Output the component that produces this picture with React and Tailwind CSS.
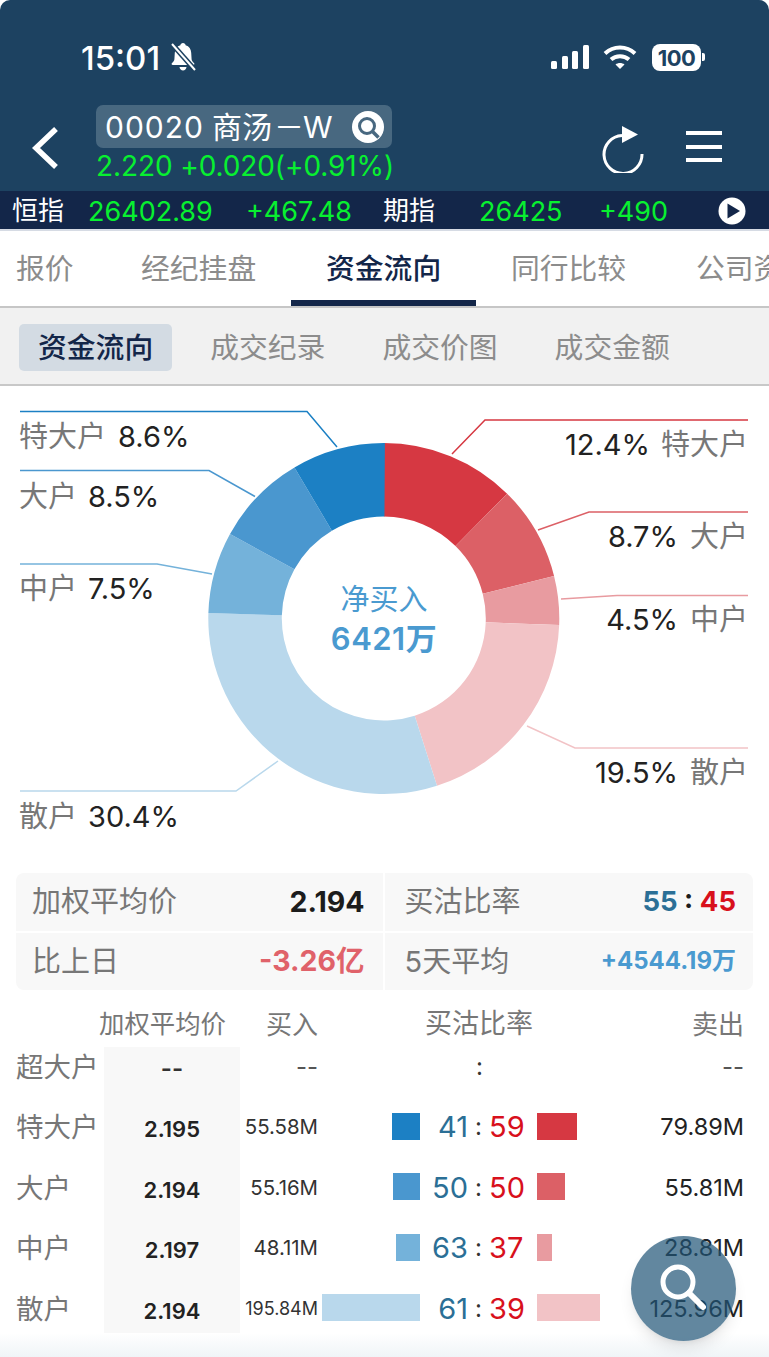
import React from "react";

const slices = [
  { pct: 12.4, color: "#d63842" },
  { pct: 8.7, color: "#dc6066" },
  { pct: 4.5, color: "#e89ba0" },
  { pct: 19.5, color: "#f2c3c6" },
  { pct: 30.4, color: "#b9d8ec" },
  { pct: 7.5, color: "#74b2da" },
  { pct: 8.5, color: "#4a97cf" },
  { pct: 8.6, color: "#1c80c4" },
];

const leaders = [
  { points: "20,411.5 307,411.5 337,447", color: "#1c80c4" },
  { points: "20,470.5 209,470.5 255,496.5", color: "#4a97cf" },
  { points: "20,564 157,564 212,574", color: "#74b2da" },
  { points: "20,791 236,791 278,761", color: "#b9d8ec" },
  { points: "748,420 485,420 452,454", color: "#d63842" },
  { points: "748,512 589,512 538,530", color: "#dc6066" },
  { points: "748,595.5 617,595.5 561,599", color: "#e89ba0" },
  { points: "748,748 575,748 527,726", color: "#f2c3c6" },
];

const leftLabels = [
  { name: "特大户", value: "8.6%", y: 447, x: 118 },
  { name: "大户", value: "8.5%", y: 507, x: 88 },
  { name: "中户", value: "7.5%", y: 599, x: 88 },
  { name: "散户", value: "30.4%", y: 827, x: 88 },
];

const rightLabels = [
  { name: "特大户", value: "12.4%", y: 455, x: 650 },
  { name: "大户", value: "8.7%", y: 547, x: 678 },
  { name: "中户", value: "4.5%", y: 630, x: 678 },
  { name: "散户", value: "19.5%", y: 783, x: 678 },
];

const rows = [
  { name: "特大户", avg: "2.195", buy: "55.58M", l: "41", r: "59", lw: 28, rw: 40, lc: "#1c80c4", rc: "#d63842", sell: "79.89M" },
  { name: "大户", avg: "2.194", buy: "55.16M", l: "50", r: "50", lw: 27, rw: 28, lc: "#4a97cf", rc: "#dc6066", sell: "55.81M" },
  { name: "中户", avg: "2.197", buy: "48.11M", l: "63", r: "37", lw: 24, rw: 15, lc: "#74b2da", rc: "#e89ba0", sell: "28.81M" },
  { name: "散户", avg: "2.194", buy: "195.84M", l: "61", r: "39", lw: 98, rw: 63, lc: "#b9d8ec", rc: "#f2c3c6", sell: "125.96M", small: true, last: true },
];

const polar = (r, deg) => {
  const a = (deg * Math.PI) / 180;
  return [383.8 + r * Math.sin(a), 618.5 - r * Math.cos(a)];
};

const slicePath = (start, end) => {
  const R = 175.5;
  const r = 102;
  const big = end - start > 180 ? 1 : 0;
  const [x1, y1] = polar(R, start);
  const [x2, y2] = polar(R, end);
  const [x3, y3] = polar(r, end);
  const [x4, y4] = polar(r, start);
  return `M${x1} ${y1}A${R} ${R} 0 ${big} 1 ${x2} ${y2}L${x3} ${y3}A${r} ${r} 0 ${big} 0 ${x4} ${y4}Z`;
};

const Donut = () => {
  let angle = 0;
  return (
    <svg width="769" height="487" viewBox="0 386 769 487" className="block">
      {slices.map((s) => {
        const start = angle;
        angle += (s.pct / 100.0) * 360;
        return <path key={s.color} d={slicePath(start, angle)} fill={s.color} />;
      })}
      {leaders.map((l) => (
        <polyline key={l.points} points={l.points} fill="none" stroke={l.color} strokeWidth="1.5" />
      ))}
      {leftLabels.map((l) => (
        <g key={l.name} fontSize="29">
          <text x="19" y={l.y} fill="#777777">{l.name}</text>
          <text x={l.x} y={l.y} fill="#222222">{l.value}</text>
        </g>
      ))}
      {rightLabels.map((l) => (
        <g key={l.name} fontSize="29" textAnchor="end">
          <text x="748" y={l.y} fill="#777777">{l.name}</text>
          <text x={l.x} y={l.y} fill="#222222">{l.value}</text>
        </g>
      ))}
      <text x="384" y="610" textAnchor="middle" fontSize="29" fill="#4a9ad0">净买入</text>
      <text x="384" y="650" textAnchor="middle" fontSize="31" fontWeight="600" letterSpacing="0.5" fill="#4a9ad0">6421万</text>
    </svg>
  );
};

const StatusBar = () => (
  <div className="flex h-[102px] items-start pt-[39px]">
    <span className="ml-[81px] text-[33px] leading-[38px] font-medium text-white">15:01</span>
    <svg width="28" height="30" viewBox="0 0 28 30" className="ml-[9px] mt-[3px]" fill="white">
      <path d="M14 1c1.5 0 2.4 1 2.6 2.2 3.6 1 5.4 4 5.6 7.6l.4 6.4c.1 1.600 1.200 2.700 2.400 3.800.8.800.4 2-.8 2H3.800c-1.200 0-1.600-1.200-.8-2 1.200-1.100 2.300-2.200 2.400-3.800l.4-6.400C6 7.200 7.800 4.200 11.400 3.200 11.600 2 12.500 1 14 1z" />
      <path d="M10.500 25h7c-.3 2-1.700 3.500-3.500 3.500s-3.200-1.500-3.500-3.500z" />
      <path d="M3 2 26 28" stroke="#1d4261" strokeWidth="5" />
      <path d="M3 2 26 28" stroke="white" strokeWidth="2" />
    </svg>
    <svg width="38" height="24" viewBox="0 0 38 24" className="ml-[354px] mt-[6px]" fill="white">
      <rect x="0" y="16" width="6" height="8" rx="1.500" />
      <rect x="11" y="11" width="6" height="13" rx="1.500" />
      <rect x="21" y="6" width="6" height="18" rx="1.500" />
      <rect x="32" y="0" width="6" height="24" rx="1.500" />
    </svg>
    <svg width="34" height="24" viewBox="0 0 34 24" className="ml-[14px] mt-[6px]" fill="none" stroke="white" strokeWidth="4">
      <path d="M2 8.500C10.500 0.500 23.500 0.500 32 8.500" />
      <path d="M8 14.500c5-4.500 13-4.500 18 0" />
      <path d="M12.500 19.500 17 24l4.500-4.500c-2.500-2-6.500-2-9 0z" fill="white" stroke="none" />
    </svg>
    <div className="ml-[15px] mt-[5px] flex h-[27px] w-[49px] items-center justify-center rounded-[8px] bg-white text-[22px] leading-none font-bold tracking-[-0.5px] text-[#1d4261]">
      100
    </div>
    <div className="ml-[1px] mt-[14px] h-[8px] w-[3px] rounded-r-[2px] bg-white" />
  </div>
);

const NavRow = () => (
  <div className="flex h-[89px] items-start">
    <svg width="30" height="44" viewBox="0 0 30 44" className="ml-[30px] mt-[24px]" fill="none" stroke="white" strokeWidth="5.500">
      <path d="M26 3 6 22l20 19" />
    </svg>
    <div className="ml-[36px] flex w-[296px] flex-col items-start">
      <div className="mt-[3px] flex h-[43px] w-[296px] items-center rounded-[7px] bg-[#486880] pl-[9px] text-[30px] leading-none whitespace-nowrap text-white">
        <span className="tracking-[1px]">00020</span>
        <span className="ml-[8px]">商汤</span>
        <span className="ml-[2px]">－</span>
        <span className="ml-[-1px]">W</span>
        <svg width="34" height="34" viewBox="0 0 34 34" className="absolute ml-[246px]">
          <circle cx="17" cy="17" r="16" fill="white" />
          <circle cx="16" cy="16" r="7.500" fill="none" stroke="#486880" strokeWidth="3" />
          <path d="m21.500 21.500 6 6" stroke="#486880" strokeWidth="3.500" />
        </svg>
      </div>
      <div className="mt-[1px] text-[28px] leading-[34px] tracking-[-0.1px] whitespace-nowrap text-[#08f030]">
        2.220 +0.020(+0.91%)
      </div>
    </div>
    <svg width="44" height="50" viewBox="0 0 44 50" className="ml-[209px] mt-[21px]" fill="none">
      <path d="M21 12.500A19 19 0 1 0 41 31" stroke="white" strokeWidth="3" />
      <path d="M21 3 37 11.500 21 20z" fill="white" />
    </svg>
    <svg width="36" height="32" viewBox="0 0 36 32" className="ml-[41px] mt-[29px]" fill="white">
      <rect y="0" width="36" height="4" />
      <rect y="14" width="36" height="4" />
      <rect y="27" width="36" height="4" />
    </svg>
  </div>
);

const Ticker = () => (
  <div className="flex h-[38px] items-center bg-[#132649] pt-[2px] text-[27px] leading-none whitespace-nowrap text-[#08f030]">
    <span className="ml-[12px] w-[76px] text-[26px] text-white">恒指</span>
    <span className="w-[158px]">26402.89</span>
    <span className="w-[137px]">+467.48</span>
    <span className="w-[96px] text-[26px] text-white">期指</span>
    <span className="w-[120px]">26425</span>
    <span className="w-[119px]">+490</span>
    <svg width="28" height="28" viewBox="0 0 28 28">
      <circle cx="14" cy="14" r="13.500" fill="white" />
      <path d="M9.500 6.500 22 14 9.500 21.500z" fill="#132649" />
    </svg>
  </div>
);

const Tabs = () => (
  <div className="flex h-[79px] overflow-hidden border-t-2 border-b-2 border-t-[#d6dbe4] border-b-[#c6c6c6] text-[28.800px] text-[#8c8c8c]">
    {["报价", "经纪挂盘", "资金流向", "同行比较", "公司资金"].map((t, i) => (
      <div
        key={t}
        className={
          i === 2
            ? "flex shrink-0 items-center whitespace-nowrap border-b-[6px] border-[#132649] px-[34.900px] pt-[6px] font-medium text-[#132649]"
            : i === 0
              ? "flex shrink-0 items-center whitespace-nowrap pl-[16px] pr-[32.500px]"
              : "flex shrink-0 items-center whitespace-nowrap px-[34.900px]"
        }
      >
        {t}
      </div>
    ))}
  </div>
);

const SubTabs = () => (
  <div className="flex h-[78px] items-center gap-[19px] border-b-2 border-[#c8c8c8] bg-[#f1f1f1] pt-[3px] pl-[19px] text-[28.800px] text-[#8c8c8c]">
    <div className="flex h-[47px] items-center rounded-[5px] bg-[#d3dbe3] px-[19px] font-medium text-[#132649]">资金流向</div>
    <div className="px-[19px]">成交纪录</div>
    <div className="px-[19px]">成交价图</div>
    <div className="px-[19px]">成交金额</div>
  </div>
);

const Stats = () => (
  <div className="mx-[16px] grid grid-cols-[366.5px_1fr] grid-rows-[57.5px_57.5px] gap-[2px] overflow-hidden rounded-[8px] text-[29px] leading-none text-[#777777]">
    <div className="flex items-center justify-between bg-[#f8f8f8] pl-[16px] pr-[18px]">
      <span>加权平均价</span>
      <span className="text-[28.500px] font-bold text-[#1c1c1c]">2.194</span>
    </div>
    <div className="flex items-center justify-between bg-[#f8f8f8] pl-[20px] pr-[17px]">
      <span>买沽比率</span>
      <span className="text-[27.500px] font-bold text-[#1c1c1c]">
        <span className="text-[#2b6f96]">55</span> : <span className="text-[#d8101c]">45</span>
      </span>
    </div>
    <div className="flex items-center justify-between bg-[#f8f8f8] pl-[16px] pr-[18px]">
      <span>比上日</span>
      <span className="text-[28.500px] font-bold text-[#e0626a]">-3.26亿</span>
    </div>
    <div className="flex items-center justify-between bg-[#f8f8f8] pl-[20px] pr-[17px]">
      <span>5天平均</span>
      <span className="text-[24px] font-bold text-[#4a9ad0]">+4544.19万</span>
    </div>
  </div>
);

const TableHead = () => (
  <div className="flex h-[57px] items-center pl-[16px] pr-[25px] pt-[11px] text-[26px] text-[#777777]">
    <div className="w-[83px]" />
    <div className="w-[127px] whitespace-nowrap text-[25.400px]">加权平均价</div>
    <div className="w-[92px] text-right">买入</div>
    <div className="w-[215px] text-right text-[27px]">买沽比率</div>
    <div className="flex-1 text-right">卖出</div>
  </div>
);

const FirstRow = () => (
  <div className="flex h-[50px] items-start pl-[16px] pr-[25px] leading-[40px]">
    <div className="w-[88px] whitespace-nowrap text-[27.500px] text-[#777777]">超大户</div>
    <div className="h-full w-[136px] bg-[#f8f8f8] pt-[2px] text-center text-[24px] font-semibold text-[#333333]">--</div>
    <div className="w-[78px] text-right text-[24px] text-[#555555]">--</div>
    <div className="w-[219px] pl-[150px] text-[24px] text-[#333333]">
      <span className="ml-[8px]">:</span>
    </div>
    <div className="flex-1 text-right text-[24px] text-[#555555]">--</div>
  </div>
);

const Row = ({ row }) => (
  <div className={row.last ? "flex h-[54px] items-start pl-[16px] pr-[25px] leading-[60px]" : "flex h-[60.500px] items-start pl-[16px] pr-[25px] leading-[60px]"}>
    <div className="w-[88px] whitespace-nowrap text-[27.500px] text-[#777777]">{row.name}</div>
    <div className="h-full w-[136px] bg-[#f8f8f8] pt-[2px] text-center text-[22px] font-semibold text-[#222222]">{row.avg}</div>
    <div className={row.small ? "w-[78px] text-right text-[18px] text-[#333333]" : "w-[78px] text-right text-[20.400px] text-[#333333]"}>{row.buy}</div>
    <div className="flex h-[58px] w-[102px] items-center justify-end">
      <div className="h-[27px]" style={{ width: row.lw, backgroundColor: row.lc }} />
    </div>
    <div className="flex w-[117px] text-[29px]">
      <span className="w-[48px] text-right text-[#2b6f96]">{row.l}</span>
      <span className="w-[21px] text-center text-[24px] text-[#333333]">:</span>
      <span className="text-[#d8101c]">{row.r}</span>
    </div>
    <div className="flex h-[58px] w-[70px] items-center">
      <div className="h-[27px] shrink-0" style={{ width: row.rw, backgroundColor: row.rc }} />
    </div>
    <div className="flex-1 text-right text-[23.500px] text-[#222222]">{row.sell}</div>
  </div>
);

const App = () => (
  <div className="relative h-[1357px] w-[769px] overflow-hidden bg-white [font-family:Inter,'Noto_Sans_CJK_SC',sans-serif]">
    <div className="rounded-t-[10px] bg-[#1d4261]">
      <StatusBar />
      <NavRow />
    </div>
    <Ticker />
    <Tabs />
    <SubTabs />
    <Donut />
    <Stats />
    <TableHead />
    <FirstRow />
    {rows.map((row) => (
      <Row key={row.name} row={row} />
    ))}
    <div className="h-[25px] bg-gradient-to-b from-white to-[#eff4f7]" />
    {/* floating search button */}
    <div className="absolute left-[631px] top-[1236px] flex h-[105px] w-[105px] items-center justify-center rounded-full bg-[#205476]/70 shadow-lg">
      <svg width="60" height="60" viewBox="0 0 60 60" fill="none" stroke="white">
        <circle cx="24" cy="23" r="15" strokeWidth="5" />
        <path d="m35 34 14 14" strokeWidth="6" strokeLinecap="round" />
      </svg>
    </div>
  </div>
);

export default App;
